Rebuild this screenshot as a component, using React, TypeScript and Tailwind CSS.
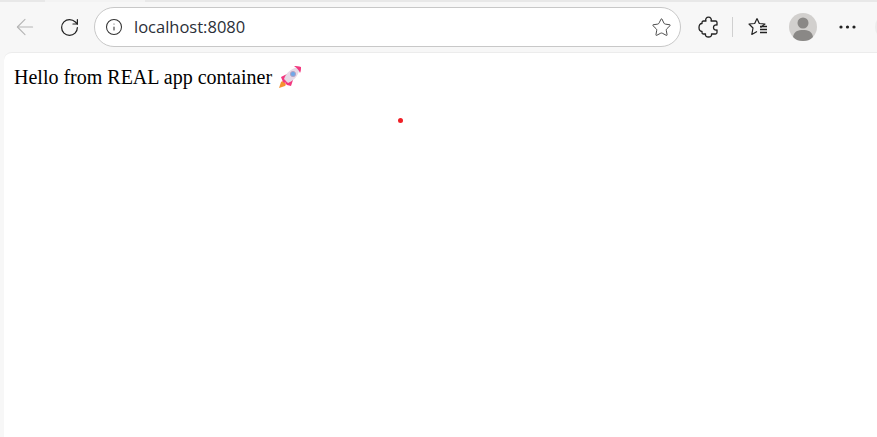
import { ArrowLeft, RotateCw, Info, Star } from 'lucide-react';

function Rocket() {
    return (
        <svg width="24" height="24" viewBox="0 0 24 24" className="shrink-0">
            <path d="M1 23 L3 17 C4 16 6 16 7 18 C8 19 8 20 7 21 Z" fill="#f59331" />
            <path d="M3 12 L9 9 L12 12 L7 18 L5 17 Z" fill="#f2387f" />
            <path d="M13 21 L15 15 L12 12 L7 18 L9 20 Z" fill="#f2387f" />
            <path d="M6 14 C8 8 13 3 21 2 C22 9 17 15 10 18 Z" fill="#e6d9e6" />
            <path d="M16 1 C18 1 21 1 23 2 C23 4 23 6 22 8 C21 5 19 3 16 1 Z" fill="#f2387f" />
            <circle cx="15" cy="9" r="2.6" fill="#6fa8e8" stroke="#b49fc0" strokeWidth="0.9" />
        </svg>
    );
}

function Avatar() {
    return (
        <svg width="28" height="28" viewBox="0 0 28 28">
            <circle cx="14" cy="14" r="14" fill="#d2d0ce" />
            <circle cx="14" cy="10" r="5.5" fill="#8a8886" />
            <path d="M4 24 C5 18 9 17 14 17 C19 17 23 18 24 24 C21 27 18 28 14 28 C10 28 7 27 4 24 Z" fill="#8a8886" />
        </svg>
    );
}

function Extensions() {
    return (
        <svg width="22" height="22" viewBox="0 0 22 22" fill="none" stroke="#222" strokeWidth="1.3" strokeLinejoin="round">
            <path d="M6.5 5 H9 C8 3 9.5 1.2 11.5 1.2 C13.5 1.2 15 3 14 5 H18.5 C19.5 5 20 5.5 20 6.5 V9 C17.5 8.5 16.5 10 16.5 11.5 C16.5 13 17.5 14.5 20 14 V16.5 C20 17.5 19.5 18 18.5 18 H14.5 C15 20 13.5 21 11.5 21 C9.5 21 8 20 8.5 18 H6.5 C5.5 18 5 17.5 5 16.5 V15.5 C3 15.5 2 14 2 11.5 C2 9 3 7.5 5 7.5 V6.5 C5 5.5 5.5 5 6.5 5 Z" />
        </svg>
    );
}

function Favorites() {
    return (
        <svg width="22" height="22" viewBox="0 0 22 22" fill="none" stroke="#222" strokeWidth="1.2" strokeLinejoin="round">
            <path d="M10 2.5 L12.3 7.5 L18 8 L13.5 11.5 M10 2.5 L7.7 7.5 L2 8 L6 12 L4.8 18.5 L10 15.5" />
            <path d="M13 10.5 H20 M13 13.5 H20 M13 16.5 H20" strokeWidth="1.3" />
        </svg>
    );
}

function Dots() {
    return (
        <svg width="18" height="6" viewBox="0 0 18 6" fill="#222">
            <circle cx="2" cy="3" r="1.6" />
            <circle cx="8.5" cy="3" r="1.6" />
            <circle cx="15" cy="3" r="1.6" />
        </svg>
    );
}

export default function App() {
    return (
        <div className="relative flex h-[437px] w-[877px] flex-col overflow-hidden bg-[#f7f7f7] font-['Liberation_Sans',sans-serif]">
            {/* Tab strip sliver */}
            <div className="flex h-[2px] bg-[#e8e8e8]">
                <div className="ml-[45px] w-[100px] bg-[#f3f3f3]" />
            </div>

            {/* Toolbar */}
            <div className="flex h-[50px] items-center">
                <ArrowLeft size={26} strokeWidth={1} className="ml-[12px] shrink-0 text-[#b5b5b5]" />
                <RotateCw size={21} strokeWidth={1.4} className="ml-[21px] shrink-0 text-[#222]" />
                <div className="ml-[14px] flex h-[40px] w-[587px] shrink-0 items-center rounded-full border border-[#c8c8c8] bg-white pl-[10px] pr-[8px]">
                    <Info size={18} strokeWidth={1.4} className="text-[#333]" />
                    <span className="ml-[11px] font-['Open_Sans',sans-serif] text-[16.5px] text-[#2b2f38]">localhost:8080</span>
                    <Star size={21} strokeWidth={1} className="ml-auto text-[#333]" />
                </div>
                <div className="ml-[16px] shrink-0">
                    <Extensions />
                </div>
                <div className="ml-[13px] h-[20px] w-px shrink-0 bg-[#d0d0d0]" />
                <div className="ml-[14px] shrink-0">
                    <Favorites />
                </div>
                <div className="ml-[20px] shrink-0">
                    <Avatar />
                </div>
                <div className="ml-[22px] shrink-0">
                    <Dots />
                </div>
                <div className="ml-[18px] h-[28px] w-[28px] shrink-0 rounded-full bg-[#ececec]" />
            </div>

            {/* Page */}
            <div className="ml-[4px] flex-1 rounded-tl-[8px] border-t border-[#ececec] bg-white px-[10px] pt-[12px] font-['Liberation_Serif',serif] text-[20px] leading-[24px] text-black">
                <div className="flex items-center gap-[6px]">
                    <span>Hello from REAL app container</span>
                    <Rocket />
                </div>
            </div>

            <div className="absolute left-[397.5px] top-[117.5px] h-[5px] w-[5px] rounded-full bg-[#f01f26]" />
        </div>
    );
}
